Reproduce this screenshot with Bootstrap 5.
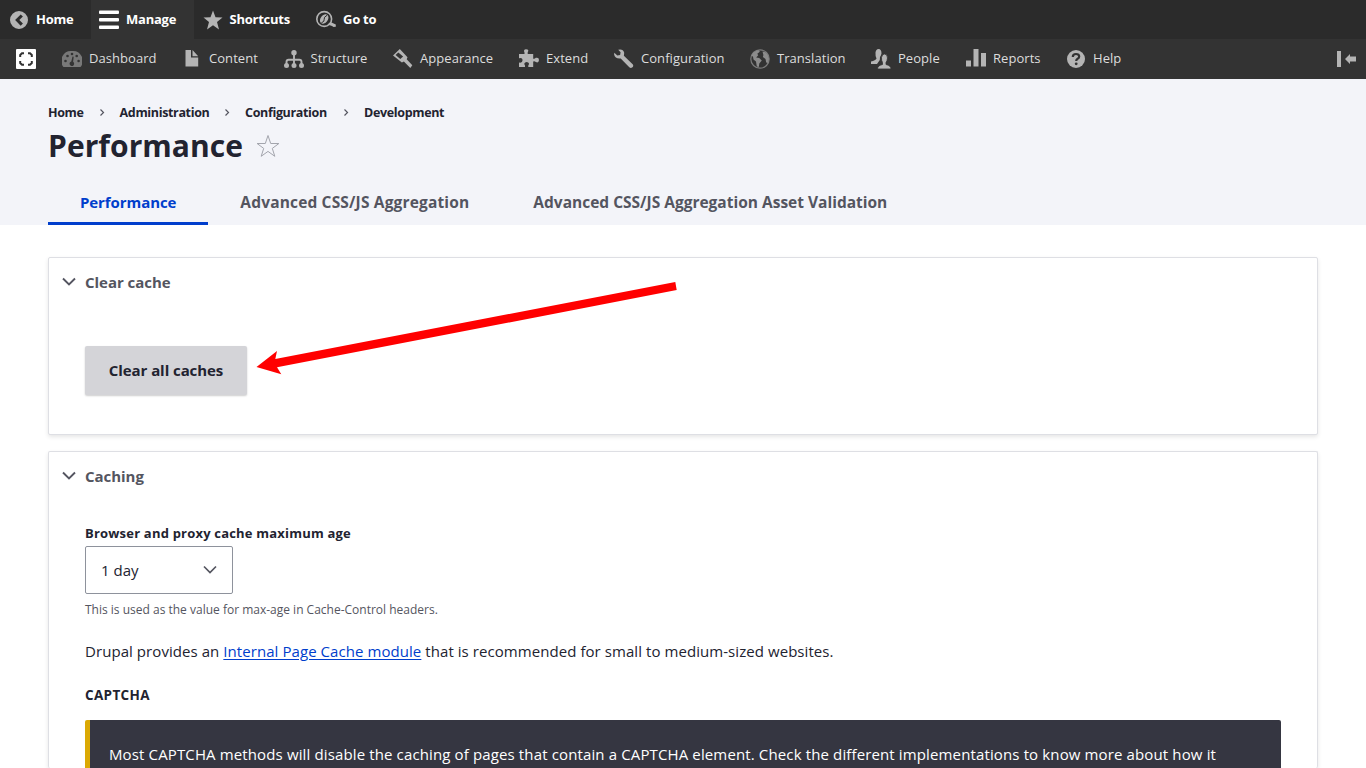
<!DOCTYPE html>
<html lang="en">
<head>
<meta charset="utf-8">
<meta name="viewport" content="width=device-width, initial-scale=1">
<title>Performance</title>
<link href="https://cdn.jsdelivr.net/npm/bootstrap@5.3.0/dist/css/bootstrap.min.css" rel="stylesheet">
<style>
body{font-family:"Open Sans","Noto Sans",sans-serif;font-size:15px;line-height:24px;color:#222330;background:#fff;overflow:hidden;height:768px}
.bar-top{height:39px;background:#2b2b2b;color:#fff;font-weight:700;font-size:13px;line-height:39px;letter-spacing:-.24px}
.bar-tray{height:40px;background:#333;color:#ddd;font-size:13px;padding-left:16px;letter-spacing:.05px}
.bar-item{gap:7px;white-space:nowrap}
.bar-tray .bar-item span{line-height:20px;padding-bottom:2px}
.bar-item svg{flex:none;fill:#b4b4b4}
.active-tab{background:#333}
.page-head{height:146px;background:#f3f4f9;padding:22px 48px 0}
.crumbs{font-size:12.5px;font-weight:700;line-height:23px;letter-spacing:-.35px}
.crumbs svg{margin:0 14px 0 15px}
h1{font-size:30px;font-weight:700;line-height:42px;letter-spacing:.05px;padding-top:1px}
.page-tabs{margin-top:12px;font-weight:700;height:46px;line-height:46px}
.page-tabs a{padding:0 32px;color:#545560;text-decoration:none;white-space:nowrap;font-size:15.5px;letter-spacing:.16px}
.page-tabs a.current{color:#003ecc;border-bottom:3px solid #003ecc;font-size:15px;letter-spacing:-.08px}
.page-tabs a.wide-tab{letter-spacing:0}
.panel{border:1px solid #dedfe4;border-radius:2px;box-shadow:0 2px 4px rgba(0,0,0,.1);background:#fff;padding:0 36px}
.panel-title{font-weight:700;color:#545560;line-height:24px;padding-top:12px;margin-left:-24px;gap:8px}
.panel-title span{letter-spacing:-.03px}
.btn-clear{width:162px;height:48.5px;margin-top:52px;background:#d4d4d8;color:#222330;border:0;border-radius:2px;font-weight:700;font-size:15px;padding:0;letter-spacing:-.065px;box-shadow:0 1px 2px rgba(0,0,0,.2)}
.strong-label{font-size:13px;font-weight:700;letter-spacing:.2px}
.caps-label{font-size:13.5px;letter-spacing:.35px}
.age-select{width:148px;height:48px;border:1px solid #8e929c;border-radius:2px;padding:0 14px 0 15px}
.hint{font-size:12px;line-height:16px;color:#545560;white-space:nowrap}
.body-line{letter-spacing:.065px;white-space:nowrap}
.notice{background:#353641;color:#fff;border-left:5px solid #dba904;border-radius:2px 2px 0 0;height:48px;padding:22px 0 0 19px;letter-spacing:.132px;white-space:nowrap;overflow:hidden}
a.doc{color:#003ecc;text-underline-offset:2px}
.pointer{position:absolute;left:0;top:0;pointer-events:none}
</style>
</head>
<body>
<nav class="bar-top d-flex">
<div class="bar-item d-flex align-items-center" style="width:91px;padding-left:9px"><svg width="20" height="20"><path fill-rule="evenodd" d="M10 1a9 9 0 1 0 0 18 9 9 0 0 0 0-18zM11.700 4.500l2.200 2-3.600 3.600 3.600 3.500-2.200 2.100-5.600-5.600z"/></svg><span>Home</span></div>
<div class="bar-item active-tab d-flex align-items-center" style="width:103px;padding-left:8px"><svg width="20" height="20" style="fill:#fff"><rect y=".5" width="20" height="3.500" rx="1"/><rect y="8" width="20" height="3.500" rx="1"/><rect y="15.500" width="20" height="3.500" rx="1"/></svg><span>Manage</span></div>
<div class="bar-item d-flex align-items-center" style="width:113px;padding-left:9px"><svg width="20" height="20"><path d="M10 .5l2.500 6.700 7 .3-5.500 4.500 2 7.500-6-4.200-6 4.200 2-7.500L.5 7.500l7-.3z"/></svg><span style="margin-left:-.5px">Shortcuts</span></div>
<div class="bar-item d-flex align-items-center" style="padding-left:9px"><svg width="20" height="20"><circle cx="8.200" cy="9" r="7.400" fill="none" stroke="#b4b4b4" stroke-width="1.600"/><ellipse cx="8.200" cy="9" rx="3.600" ry="5.200" transform="rotate(38 8.200 9)"/><path d="M11 5.300q-3.500 2-2.800 4T5.300 13" stroke="#2b2b2b" fill="none"/><path d="M11.500 14.500l3-2.500 5.300 2.500v2.300l-2.300.2-1.500-.9z"/></svg><span>Go to</span></div>
</nav>
<nav class="bar-tray d-flex">
<div class="bar-item d-flex align-items-center" style="width:46px"><svg width="20" height="20"><rect width="20" height="20" rx="1" style="fill:#fff"/><path d="M4.200 8V6l1.800-1.800h2M12 4.200h2L15.800 6v2M15.800 12v2L14 15.800h-2M8 15.800H6L4.200 14v-2" fill="none" stroke="#333" stroke-width="2"/></svg></div>
<div class="bar-item d-flex align-items-center" style="width:120px"><svg width="20" height="20"><path style="fill:#787878" d="M1.500 18A9.800 9.800 0 0 1 10 2a9.800 9.800 0 0 1 8.500 16z"/><g style="fill:#333"><circle cx="3.500" cy="12" r="1.300"/><circle cx="5.500" cy="7" r="1.300"/><circle cx="10" cy="5" r="1.300"/><circle cx="14.700" cy="7" r="1.300"/><circle cx="16.600" cy="12" r="1.300"/><path d="M10.500 7.500l1.200.3-.6 5a2.300 2.300 0 1 1-1.800-.3z"/></g></svg><span>Dashboard</span></div>
<div class="bar-item d-flex align-items-center" style="width:102px"><svg width="20" height="20"><path d="M3.500 1H9v7.500h7.200V17.500H3.500zM10.500 1l5.700 6.300h-5.700z"/></svg><span>Content</span></div>
<div class="bar-item d-flex align-items-center" style="width:109px"><svg width="20" height="20"><circle cx="10" cy="3.800" r="2.700"/><circle cx="2.500" cy="16.500" r="2.500"/><circle cx="10" cy="16.500" r="2.500"/><circle cx="17.500" cy="16.500" r="2.500"/><path d="M10 5v11M2.500 16v-3q0-2.200 2.200-2.200h10.600q2.200 0 2.200 2.200v3" fill="none" stroke="#b4b4b4" stroke-width="1.900"/></svg><span style="margin-left:-.5px">Structure</span></div>
<div class="bar-item d-flex align-items-center" style="width:126px"><svg width="20" height="20"><path fill-rule="evenodd" d="M0 6.500L6.800 0l7.700 8.300-.8 2 5.600 6-2 2.700-6.400-6.500-2 1zM5.300 3.400L2.600 6l4.700 4 2.800-2.600z"/></svg><span>Appearance</span></div>
<div class="bar-item d-flex align-items-center" style="width:95px"><svg width="20" height="20"><path d="M0 5h5.500V3.500Q4 .5 7 .3q3.500.2 1.700 3V5h5.500v4.700q1.500.6 2.600-.9 3.200-.8 3.200 2.200-.3 3.500-3.200 2-1.200-1.300-2.600-.6V18H9.300v-1.500q2-3-1.600-3.500-3.700.5-1.700 3.500V18H0v-4.500q3.500.8 3.600-2.500-.3-2.700-3.600-1.700z"/></svg><span>Extend</span></div>
<div class="bar-item d-flex align-items-center" style="width:136px"><svg width="20" height="20"><path d="M4.200.7q4.800-1.200 6 3l-.3 3 9 8.700q1 2-.8 3.200-1.500.8-2.800-.3L6.700 9.500Q1 10 .1 5.500l.2-1.700 3 2.700 2.800-.6.5-2.600z"/></svg><span>Configuration</span></div>
<div class="bar-item d-flex align-items-center" style="width:121px"><svg width="20" height="20"><circle cx="10" cy="10" r="9.200" fill="none" stroke="#7c7c7c" stroke-width="1.200"/><path style="fill:#8c8c8c" d="M1.400 6.500Q4 1.500 9 1.200l.8 1.500-2.500 2 .9 1.500-2 2.200 3 .7 2.600 2.300-2.500 3.200-.5 3.500-2-.7-.8-5-2.500-2-.5-2.600zM12.500 2.500l2.200.2Q18.500 5 19 10l-.8 4-2-.6-.7-3.500-2.600-2 .5-2z"/></svg><span>Translation</span></div>
<div class="bar-item d-flex align-items-center" style="width:95px"><svg width="20" height="20"><path d="M4.500 3.500Q5 0 7.500 0q3 .2 3 4.500-.5 2-1.500 3.500L8.800 11 6 15H0v-2.500q4.500-1 5.500-3-1.300-3-1-6z"/><path d="M10.500 8.500Q11 5 13.500 5q3 .2 3 4-.3 3-1.500 4.500v2q5 1 5 4.500H6.500q0-3.500 5-4.500v-2q-1.300-2-1-5z" stroke="#333" stroke-width=".8"/></svg><span>People</span></div>
<div class="bar-item d-flex align-items-center" style="width:100px"><svg width="20" height="20"><path d="M0 11.500h5v6H0zM7.500 0h5v17.500h-5zM15 4h5v13.500h-5z"/></svg><span>Reports</span></div>
<div class="bar-item d-flex align-items-center"><svg width="20" height="20"><circle cx="10" cy="10" r="9"/><path d="M6.800 8Q6.800 5 10 5t3.200 2.600Q13.200 9 11.300 10 10.200 10.600 10.200 12" fill="none" stroke="#333" stroke-width="2.200"/><circle cx="10.200" cy="14.800" r="1.400" style="fill:#333"/></svg><span>Help</span></div>
<div class="bar-item d-flex align-items-center ms-auto" style="padding-right:9px"><svg width="20" height="20"><path d="M0 2h4v16H0zM8 10l5-5v2.500h6v5h-6V15z"/></svg></div>
</nav>
<header class="page-head">
<div class="crumbs d-flex align-items-center"><span>Home</span><svg width="7" height="9"><path d="M1.500 1.500l3 3-3 3" fill="none" stroke="#545560" stroke-width="1.200"/></svg><span style="width:89.500px">Administration</span><svg width="7" height="9"><path d="M1.500 1.500l3 3-3 3" fill="none" stroke="#545560" stroke-width="1.200"/></svg><span style="width:83px">Configuration</span><svg width="7" height="9"><path d="M1.500 1.500l3 3-3 3" fill="none" stroke="#545560" stroke-width="1.200"/></svg><span>Development</span></div>
<div class="d-flex align-items-center"><h1 class="mb-0">Performance</h1><svg width="24" height="24" style="margin:0 0 0 13px"><path d="M12 1.500l2.700 8h8.200l-6.600 4.900 2.500 7.900-6.800-4.900-6.800 4.900 2.500-7.900L1.100 9.500h8.200z" fill="none" stroke="#a3a5ad"/></svg></div>
<nav class="page-tabs d-flex"><a class="current" href="#">Performance</a><a href="#">Advanced CSS/JS Aggregation</a><a class="wide-tab" href="#">Advanced CSS/JS Aggregation Asset Validation</a></nav>
</header>
<main class="px-5 d-flex flex-column gap-3" style="padding-top:32px">
<section class="panel" style="height:178px">
<div class="panel-title d-flex align-items-center"><svg width="16" height="16"><path d="M2 4.500l6 6 6-6" fill="none" stroke="#545560" stroke-width="1.900"/></svg><span>Clear cache</span></div>
<button class="btn-clear btn">Clear all caches</button>
</section>
<section class="panel border-bottom-0" style="height:317px">
<div class="panel-title d-flex align-items-center"><svg width="16" height="16"><path d="M2 4.500l6 6 6-6" fill="none" stroke="#545560" stroke-width="1.900"/></svg><span>Caching</span></div>
<div class="strong-label" style="margin-top:33px">Browser and proxy cache maximum age</div>
<div class="age-select d-flex align-items-center justify-content-between" style="margin-top:1px"><span>1 day</span><svg width="16" height="16"><path d="M2 4.500l6 6 6-6" fill="none" stroke="#545560" stroke-width="1.700"/></svg></div>
<div class="hint" style="margin-top:8px">This is used as the value for max-age in Cache-Control headers.</div>
<p class="body-line" style="margin:21px 0 0">Drupal provides an <a class="doc" href="#">Internal Page Cache module</a> that is recommended for small to medium-sized websites.</p>
<div class="strong-label caps-label" style="margin-top:20px">CAPTCHA</div>
<div class="notice" style="margin-top:13px">Most CAPTCHA methods will disable the caching of pages that contain a CAPTCHA element. Check the different implementations to know more about how it</div>
</section>
</main>
<svg class="pointer" width="1366" height="768"><path fill="#f00" d="M256.500 367L277 351l-1.700 8L675.300 282l1.400 8L277 367.300l4.300 7z"/></svg>
</body>
</html>
